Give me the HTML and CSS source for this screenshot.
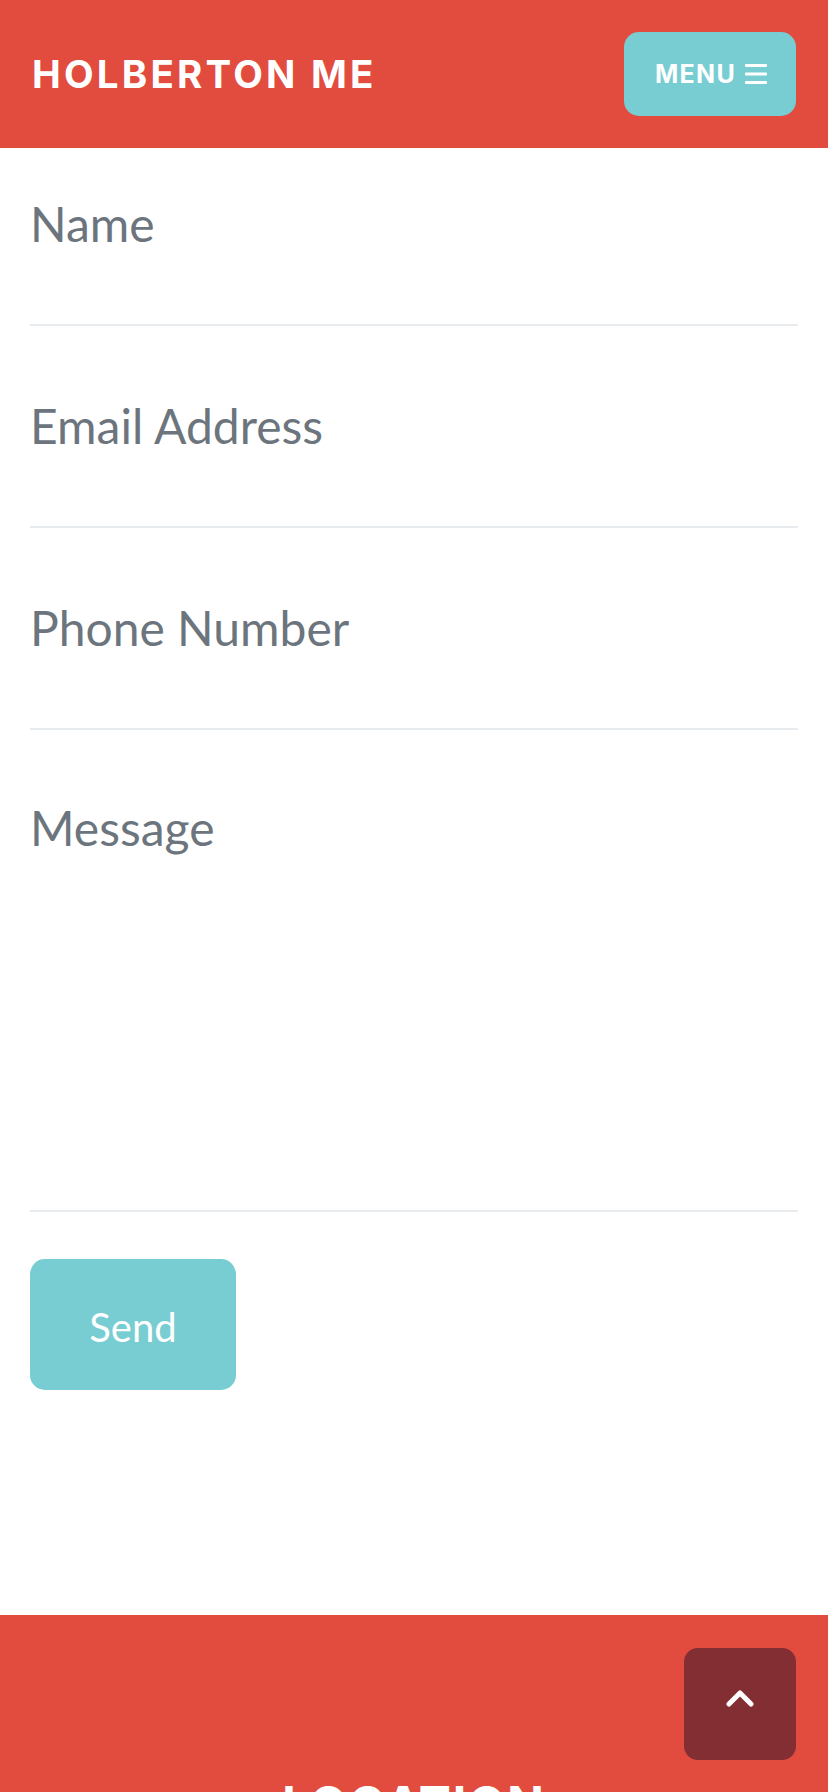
FILE: index.html
```html
<!DOCTYPE html>
<html lang="en">
<head>
<meta charset="utf-8">
<title>Holberton Me</title>
<link rel="stylesheet" href="styles.css">
</head>
<body>
<header class="topbar">
  <a class="brand" href="#">HOLBERTON ME</a>
  <button class="menu-btn" type="button">
    <span>MENU</span>
    <svg class="bars" width="22" height="20" viewBox="0 0 22 20" aria-hidden="true">
      <rect x="0" y="0" width="22" height="3" rx="0.8"/>
      <rect x="0" y="8.5" width="22" height="3" rx="0.8"/>
      <rect x="0" y="17" width="22" height="3" rx="0.8"/>
    </svg>
  </button>
</header>

<main class="contact">
  <form class="contact-form">
    <div class="field field-first">
      <input class="input" type="text" placeholder="Name">
    </div>
    <div class="field">
      <input class="input" type="email" placeholder="Email Address">
    </div>
    <div class="field">
      <input class="input" type="tel" placeholder="Phone Number">
    </div>
    <div class="field field-message">
      <textarea class="textarea" placeholder="Message"></textarea>
    </div>
    <div class="actions">
      <button class="send-btn" type="button">Send</button>
    </div>
  </form>
</main>

<footer class="footer">
  <h4 class="footer-title">LOCATION</h4>
  <p class="footer-text">2215 John Daniel Drive<br>Clark, MO 65243</p>
</footer>

<a class="to-top" href="#">
  <svg width="28" height="18" viewBox="0 0 28 18" aria-hidden="true">
    <polyline points="3,15 14,4 25,15" fill="none" stroke="#fff" stroke-width="5" stroke-linecap="round" stroke-linejoin="round"/>
  </svg>
</a>
</body>
</html>
```

FILE: styles.css
```css
html, body {
  margin: 0;
  padding: 0;
  background: #ffffff;
}

body {
  font-family: "Lato", "Liberation Sans", sans-serif;
  color: #212529;
}

.topbar {
  height: 148px;
  background: #e24c3f;
  display: flex;
  align-items: center;
  justify-content: space-between;
  padding: 0 32px;
  box-sizing: border-box;
}

.brand {
  font-family: "Inter", "Liberation Sans", sans-serif;
  font-weight: 700;
  font-size: 38.5px;
  letter-spacing: 3.2px;
  color: #ffffff;
  text-decoration: none;
  line-height: 1;
}

.menu-btn {
  width: 172px;
  height: 84px;
  border: none;
  border-radius: 15px;
  background: #78cdd2;
  color: #ffffff;
  display: flex;
  align-items: center;
  justify-content: center;
  gap: 9px;
  padding: 0 0 0 2px;
  font-family: "Inter", "Liberation Sans", sans-serif;
  font-weight: 700;
  font-size: 25px;
  letter-spacing: 1.3px;
}

.bars {
  fill: #ffffff;
  margin-top: -1px;
}

.contact {
  padding: 0 30px;
}

.contact-form {
  display: flex;
  flex-direction: column;
}

.field {
  padding: 64px 0 64px;
  border-bottom: 2px solid #e9ecef;
}

.field-first {
  padding-top: 40px;
}

.field-message {
  padding-top: 62px;
  padding-bottom: 0;
}

.input,
.textarea {
  display: block;
  width: 100%;
  box-sizing: border-box;
  border: none;
  outline: none;
  background: none;
  padding: 0;
  margin: 0;
  font-family: "Lato", "Liberation Sans", sans-serif;
  font-size: 48px;
  color: #495057;
}

.input {
  height: 72px;
  line-height: 72px;
}

.textarea {
  height: 418px;
  line-height: 72px;
  resize: none;
}

.input::placeholder,
.textarea::placeholder {
  color: #6c757d;
  opacity: 1;
}

.actions {
  padding-top: 47px;
  padding-bottom: 225px;
}

.send-btn {
  width: 206px;
  height: 131px;
  border: none;
  border-radius: 15px;
  background: #78cdd2;
  color: #ffffff;
  font-family: "Lato", "Liberation Sans", sans-serif;
  font-size: 40px;
  padding: 5px 0 0;
}

.footer {
  background: #e24c3f;
  color: #ffffff;
  text-align: center;
  padding: 160px 30px 160px;
}

.footer-title {
  margin: 0 0 40px;
  font-family: "Inter", "Liberation Sans", sans-serif;
  font-weight: 700;
  font-size: 48px;
  line-height: 1.2;
  letter-spacing: 2px;
}

.footer-text {
  margin: 0;
  font-size: 40px;
  line-height: 1.5;
}

.to-top {
  position: fixed;
  right: 32px;
  bottom: 32px;
  width: 112px;
  height: 112px;
  border-radius: 14px;
  background: #822e33;
  display: flex;
  align-items: center;
  justify-content: center;
  padding-bottom: 12px;
  box-sizing: border-box;
}
```
